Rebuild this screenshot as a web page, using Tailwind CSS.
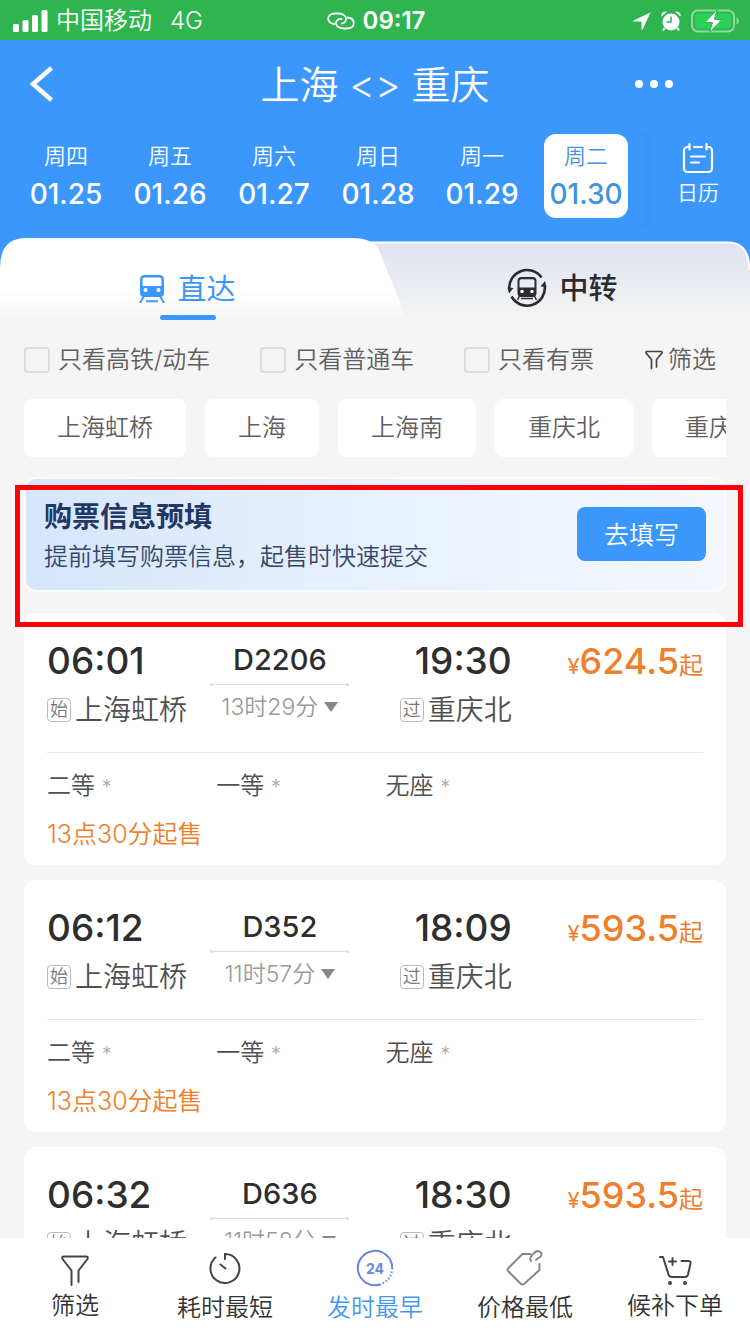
<!DOCTYPE html>
<html lang="zh-CN">
<head>
<meta charset="utf-8">
<meta name="viewport" content="width=device-width, initial-scale=1">
<title>上海 &lt;&gt; 重庆</title>
<script src="https://cdn.jsdelivr.net/npm/@tailwindcss/browser@4"></script>
</head>
<body class="flex h-screen flex-col overflow-hidden bg-[#f5f5f5] font-['Inter','Noto_Sans_CJK_SC',sans-serif] text-[24px] leading-[32px] font-[350] text-[#505050]">

<!-- Status bar -->
<div class="grid h-10 shrink-0 grid-cols-[1fr_auto_1fr] items-center bg-[#2fb54f] pt-[2px] pr-[10px] pl-3 text-white">
  <div class="flex items-center">
    <svg class="h-[22px] w-[36px]" viewBox="0 0 36 22" fill="currentColor"><rect x="1" y="14" width="6" height="8" rx="1.5"/><rect x="10.500" y="10" width="6" height="12" rx="1.5"/><rect x="20" y="5" width="6" height="17" rx="1.5"/><rect x="29.500" y="0" width="6" height="22" rx="1.5"/></svg>
    <span class="ml-2">中国移动</span>
    <span class="ml-[18px]">4G</span>
  </div>
  <div class="flex items-center gap-2">
    <svg class="h-[18px] w-[28px]" viewBox="0 0 28 18" fill="none" stroke="currentColor" stroke-width="1.800" stroke-linecap="round"><path d="M7 12C3.500 11.500 1.200 9.300 1.200 6.600 1.200 3.500 4 1.500 8 1.500h3c4 0 7.500 1.800 8 4.500.400 2.800-1.500 5-4 5.500"/><path d="M20.500 5.500c4 .500 6.300 2.900 6.300 5.700 0 3.100-2.800 5.300-6.800 5.300h-3c-4.500 0-8-2.300-8-5.300C9 8.500 11.500 6.500 14.500 7"/></svg>
    <span class="font-semibold">09:17</span>
  </div>
  <div class="flex items-center justify-end gap-[10px]">
    <svg class="h-[18px] w-[18px]" viewBox="0 0 18 18" fill="currentColor"><path d="M17.500.500.500 8.500c-.500.300-.400 1 .200 1H8.500v7.700c0 .700.800.800 1.100.200z"/></svg>
    <svg class="h-[20px] w-[20px]" viewBox="0 0 20 20"><g fill="currentColor"><circle cx="10" cy="11" r="8.500"/><path d="M.500 5.500A4 4 0 0 1 6 .800zM19.500 5.500A4 4 0 0 0 14 .800z"/></g><path d="m3.500 17-1.500 2.500M16.500 17l1.500 2.500" stroke="currentColor" stroke-width="2"/><path d="M10 5.500V11H5.500" fill="none" stroke="#2fb54f" stroke-width="1.500"/></svg>
    <svg class="h-[24px] w-[49px]" viewBox="0 0 49 24"><rect x="1" y="1.500" width="42" height="21" rx="6" fill="none" stroke="#8fd9a0" stroke-width="2"/><rect x="4" y="4.500" width="36" height="15" rx="3.500" fill="#2ed158"/><path d="M45.500 8.500c3 1 3 6 0 7z" fill="#8fd9a0"/><path d="M26 .500 14 13.500h7.500L18.500 23.500 31 10.500h-7.500z" fill="#fff" stroke="#2fb54f"/></svg>
  </div>
</div>

<!-- Title and dates -->
<header class="shrink-0 bg-[#3b97fb] text-white">
  <div class="grid h-[88px] grid-cols-[1fr_auto_1fr] items-center pr-[77px] pl-[29px]">
    <button type="button" aria-label="返回" class="w-[26px]"><svg class="h-[36px] w-[26px]" viewBox="0 0 26 36" fill="none" stroke="currentColor" stroke-width="4.500"><path d="M22.500 2 4 18l18.500 16"/></svg></button>
    <h1 class="ml-12 pt-[2px] text-[39px] leading-[48px]">上海 &lt;&gt; 重庆</h1>
    <button type="button" aria-label="更多" class="justify-self-end"><svg class="h-2 w-[38px]" viewBox="0 0 38 8" fill="currentColor"><circle cx="4" cy="4" r="4"/><circle cx="19" cy="4" r="4"/><circle cx="34" cy="4" r="4"/></svg></button>
  </div>
  <nav class="flex h-[110px] items-start justify-between pt-[6px] pr-2 pl-6" aria-label="日期">
    <div class="flex flex-1 justify-between text-[22px] leading-[28px]">
      <button type="button" class="h-[84px] w-[84px] rounded-xl pb-[3px]"><span class="block">周四</span><span class="mt-[10px] block text-[28px] font-[450]">01.25</span></button>
      <button type="button" class="h-[84px] w-[84px] rounded-xl pb-[3px]"><span class="block">周五</span><span class="mt-[10px] block text-[28px] font-[450]">01.26</span></button>
      <button type="button" class="h-[84px] w-[84px] rounded-xl pb-[3px]"><span class="block">周六</span><span class="mt-[10px] block text-[28px] font-[450]">01.27</span></button>
      <button type="button" class="h-[84px] w-[84px] rounded-xl pb-[3px]"><span class="block">周日</span><span class="mt-[10px] block text-[28px] font-[450]">01.28</span></button>
      <button type="button" class="h-[84px] w-[84px] rounded-xl pb-[3px]"><span class="block">周一</span><span class="mt-[10px] block text-[28px] font-[450]">01.29</span></button>
      <button type="button" class="h-[84px] w-[84px] rounded-xl bg-white pb-[3px] text-[#4392e0]" aria-current="date"><span class="block">周二</span><span class="mt-[10px] block text-[28px] font-[450]">01.30</span></button>
    </div>
    <div class="ml-3 h-[92px] w-[14px] bg-gradient-to-r from-[#3b97fb] via-[#3793f6] to-[#3b97fb]"></div>
    <button type="button" class="flex w-[88px] flex-col items-center pt-2 text-[21px] leading-[28px]">
      <svg class="h-[32px] w-[32px]" viewBox="0 0 32 32" fill="none" stroke="currentColor" stroke-width="2.200" stroke-linecap="round"><path d="M7.500 5H5.500A3.500 3.500 0 0 0 2 8.500v18A3.500 3.500 0 0 0 5.500 30h21a3.500 3.500 0 0 0 3.500-3.500v-18A3.500 3.500 0 0 0 26.500 5h-2M12 5h8M7.500 2v5.500M24.500 2v5.500M9 14.500h14M9 20.500h8"/></svg>
      <span class="mt-[5px]">日历</span>
    </button>
  </nav>
</header>

<!-- Trip type tabs -->
<div class="relative h-[84px] shrink-0 bg-gradient-to-b from-[#3b97fb] from-50% to-[#f5f5f5] to-50%">
  <svg class="absolute inset-0 h-full w-full" viewBox="0 0 750 84" preserveAspectRatio="none" aria-hidden="true">
    <defs>
      <linearGradient id="tabOn" x1="0" y1="0" x2="0" y2="1"><stop offset=".6" stop-color="#fff"/><stop offset="1" stop-color="#f5f5f5"/></linearGradient>
      <linearGradient id="tabOff" x1="0" y1="0" x2="0" y2="1"><stop offset="0" stop-color="#e2e1f6"/><stop offset=".2" stop-color="#e2e6ef"/><stop offset="1" stop-color="#f5f5f5"/></linearGradient>
    </defs>
    <path d="M340 4.500H728Q750 4.500 750 32V84H340z" fill="url(#tabOff)"/>
    <path d="M340 4.500H728Q749 4.500 749.500 32" fill="none" stroke="#fff" stroke-width="2"/>
    <path d="M0 84V30Q0 0 26 0H352Q373 0 379 12L408 84z" fill="url(#tabOn)"/>
  </svg>
  <div class="relative grid h-full grid-cols-2" role="tablist">
    <button type="button" role="tab" aria-selected="true" class="flex flex-col items-center pt-[32px] text-[29px] leading-[36px] font-normal text-[#3b97fb]">
      <span class="flex items-center gap-3">
        <svg class="h-[28px] w-[26px]" viewBox="0 0 26 28"><path d="M6 0h14q5 0 5 5v13q0 4-4 4H5q-4 0-4-4V5q0-5 5-5zM3.500 4v7h19V4q-.500-1.500-2-1.500h-15q-1.500 0-2 1.500z" fill="#3b97fb" fill-rule="evenodd"/><circle cx="6.500" cy="15" r="2" fill="#fff"/><circle cx="19.500" cy="15" r="2" fill="#fff"/><path d="M4.500 22 1 28M21.500 22l3.500 6M7 26.300h12" stroke="#3b97fb" stroke-width="2"/></svg>
        <span class="pt-[2px]">直达</span>
      </span>
      <span class="mt-[7px] h-[5px] w-[56px] rounded-full bg-[#3b97fb]"></span>
    </button>
    <button type="button" role="tab" aria-selected="false" class="flex items-start justify-center gap-3 pt-[30px] text-[29px] leading-[38px] font-medium text-[#2b2b2f]">
      <svg class="h-[40px] w-[40px]" viewBox="0 0 40 40"><g fill="none" stroke="currentColor" stroke-width="2.600"><path d="M2.300 21.500A17.800 17.800 0 0 1 34.500 9.500"/><path d="M37.700 17.500A17.800 17.800 0 0 1 4.500 28.500"/></g><path d="M.500 19.500 6.500 20 2 25.500zM39.500 19l-6-.500L38 13z" fill="currentColor"/><path d="M14.500 9h11q4 0 4 4v12q0 4-4 4h-11q-4 0-4-4V13q0-4 4-4zM12.500 13v6.500h15V13q0-1.800-1.800-1.800H14.300Q12.500 11.200 12.500 13z" fill="currentColor" fill-rule="evenodd"/><circle cx="15" cy="23.500" r="1.800" fill="#e9ecf2"/><circle cx="25" cy="23.500" r="1.800" fill="#e9ecf2"/><path d="m12.500 28-2 4M27.500 28l2 4M14 30.500h12" stroke="currentColor" stroke-width="1.500"/></svg>
      <span class="pt-[2px]">中转</span>
    </button>
  </div>
</div>

<main class="relative flex min-h-0 flex-1 flex-col overflow-hidden px-6">
  <!-- Quick filters -->
  <form class="mt-[22px] flex shrink-0 items-center justify-between pr-[10px] text-[#606060]">
    <label class="flex items-center gap-2"><input type="checkbox" class="h-[26px] w-[26px] appearance-none rounded-[4px] border-2 border-[#dcdcdc]">只看高铁/动车</label>
    <label class="flex items-center gap-2"><input type="checkbox" class="h-[26px] w-[26px] appearance-none rounded-[4px] border-2 border-[#dcdcdc]">只看普通车</label>
    <label class="flex items-center gap-2"><input type="checkbox" class="h-[26px] w-[26px] appearance-none rounded-[4px] border-2 border-[#dcdcdc]">只看有票</label>
    <button type="button" class="flex items-center gap-1">
      <svg class="h-[20px] w-[20px]" viewBox="0 0 20 20" fill="none" stroke="#444" stroke-width="1.700" stroke-linecap="round" stroke-linejoin="round"><path d="M7.500 18.500V9.500L2 3q-.500-1.500 1-1.500h14q1.500 0 1 1.500l-5.500 6.500v7.500"/></svg>
      <span>筛选</span>
    </button>
  </form>

  <!-- Stations -->
  <div class="mt-[23px] flex shrink-0 gap-[19px] overflow-hidden text-[#606060]">
    <button type="button" class="h-[58px] shrink-0 rounded-lg bg-white px-[33px]">上海虹桥</button>
    <button type="button" class="h-[58px] shrink-0 rounded-lg bg-white px-[33px]">上海</button>
    <button type="button" class="h-[58px] shrink-0 rounded-lg bg-white px-[33px]">上海南</button>
    <button type="button" class="h-[58px] shrink-0 rounded-lg bg-white px-[33px]">重庆北</button>
    <button type="button" class="h-[58px] shrink-0 rounded-lg bg-white px-[33px]">重庆西</button>
  </div>

  <!-- Pre-fill banner -->
  <section class="mt-5 flex h-[115px] shrink-0 items-start justify-between rounded-xl border-2 border-[#f8fbff] bg-gradient-to-r from-[#d6e6fb] via-[#e8f1fe] to-[#f4f7fc] pr-[18px] pl-[18px]">
    <div class="pt-[20px] text-[#33486b]">
      <h2 class="text-[28px] leading-[36px] font-bold text-[#1f3864]">购票信息预填</h2>
      <p class="mt-[6px]">提前填写购票信息，起售时快速提交</p>
    </div>
    <button type="button" class="mt-[28px] h-[54px] w-[129px] rounded-lg bg-[#3b97fb] pt-[2px] text-[25px] text-white">去填写</button>
  </section>

  <!-- Trains -->
  <ul class="mt-[21px] flex flex-col gap-[15px]">
    <li class="h-[252px] shrink-0 rounded-xl bg-white px-[23px] pt-[28px]">
      <div class="grid h-[112px] grid-cols-[163fr_139fr_162fr_191fr] border-b border-[#e8e8e8]">
        <div>
          <p class="text-[37px] leading-[40px] font-[450] text-[#2e2e2e]">06:01</p>
          <p class="mt-[11px] flex items-center gap-1 text-[28px] leading-[36px] whitespace-nowrap"><span class="flex h-6 w-6 items-center justify-center rounded-[4px] border border-[#bbb] text-[18px] text-[#777]">始</span>上海虹桥</p>
        </div>
        <div class="text-center">
          <p class="relative border-b border-[#dcdcdc] pt-[3px] pb-2 text-[29px] leading-[32px] font-[450] text-[#2e2e2e] before:absolute before:-bottom-[2px] before:left-0 before:h-[3px] before:w-[3px] before:rounded-full before:bg-[#dcdcdc] after:absolute after:right-0 after:-bottom-[2px] after:h-[3px] after:w-[3px] after:rounded-full after:bg-[#dcdcdc]">D2206</p>
          <p class="mt-[6px] flex items-center justify-center gap-[6px] text-[23px] whitespace-nowrap text-[#999]">13时29分<svg class="h-[10px] w-[14px]" viewBox="0 0 14 10" fill="#888"><path d="M0 0h14L7 10z"/></svg></p>
        </div>
        <div class="flex flex-col items-end">
          <p class="text-[37px] leading-[40px] font-[450] text-[#2e2e2e]">19:30</p>
          <p class="mt-[11px] flex items-center gap-1 text-[28px] leading-[36px] whitespace-nowrap"><span class="flex h-6 w-6 items-center justify-center rounded-[4px] border border-[#bbb] text-[18px] text-[#777]">过</span>重庆北</p>
        </div>
        <p class="text-right leading-[40px] font-normal whitespace-nowrap text-[#ee7f2d]"><span class="text-[22px]">¥</span><span class="text-[36px] font-[450]">624.5</span>起</p>
      </div>
      <div class="mt-[17px] grid grid-cols-[169fr_169fr_317fr]">
        <p>二等 <span class="text-[20px] text-[#aaa]">*</span></p>
        <p>一等 <span class="text-[20px] text-[#aaa]">*</span></p>
        <p>无座 <span class="text-[20px] text-[#aaa]">*</span></p>
      </div>
      <p class="mt-[15px] text-[25px] text-[#ee7f2d]">13点30分起售</p>
    </li>
    <li class="h-[252px] shrink-0 rounded-xl bg-white px-[23px] pt-[28px]">
      <div class="grid h-[112px] grid-cols-[163fr_139fr_162fr_191fr] border-b border-[#e8e8e8]">
        <div>
          <p class="text-[37px] leading-[40px] font-[450] text-[#2e2e2e]">06:12</p>
          <p class="mt-[11px] flex items-center gap-1 text-[28px] leading-[36px] whitespace-nowrap"><span class="flex h-6 w-6 items-center justify-center rounded-[4px] border border-[#bbb] text-[18px] text-[#777]">始</span>上海虹桥</p>
        </div>
        <div class="text-center">
          <p class="relative border-b border-[#dcdcdc] pt-[3px] pb-2 text-[29px] leading-[32px] font-[450] text-[#2e2e2e] before:absolute before:-bottom-[2px] before:left-0 before:h-[3px] before:w-[3px] before:rounded-full before:bg-[#dcdcdc] after:absolute after:right-0 after:-bottom-[2px] after:h-[3px] after:w-[3px] after:rounded-full after:bg-[#dcdcdc]">D352</p>
          <p class="mt-[6px] flex items-center justify-center gap-[6px] text-[23px] whitespace-nowrap text-[#999]">11时57分<svg class="h-[10px] w-[14px]" viewBox="0 0 14 10" fill="#888"><path d="M0 0h14L7 10z"/></svg></p>
        </div>
        <div class="flex flex-col items-end">
          <p class="text-[37px] leading-[40px] font-[450] text-[#2e2e2e]">18:09</p>
          <p class="mt-[11px] flex items-center gap-1 text-[28px] leading-[36px] whitespace-nowrap"><span class="flex h-6 w-6 items-center justify-center rounded-[4px] border border-[#bbb] text-[18px] text-[#777]">过</span>重庆北</p>
        </div>
        <p class="text-right leading-[40px] font-normal whitespace-nowrap text-[#ee7f2d]"><span class="text-[22px]">¥</span><span class="text-[36px] font-[450]">593.5</span>起</p>
      </div>
      <div class="mt-[17px] grid grid-cols-[169fr_169fr_317fr]">
        <p>二等 <span class="text-[20px] text-[#aaa]">*</span></p>
        <p>一等 <span class="text-[20px] text-[#aaa]">*</span></p>
        <p>无座 <span class="text-[20px] text-[#aaa]">*</span></p>
      </div>
      <p class="mt-[15px] text-[25px] text-[#ee7f2d]">13点30分起售</p>
    </li>
    <li class="h-[252px] shrink-0 rounded-xl bg-white px-[23px] pt-[28px]">
      <div class="grid h-[112px] grid-cols-[163fr_139fr_162fr_191fr] border-b border-[#e8e8e8]">
        <div>
          <p class="text-[37px] leading-[40px] font-[450] text-[#2e2e2e]">06:32</p>
          <p class="mt-[11px] flex items-center gap-1 text-[28px] leading-[36px] whitespace-nowrap"><span class="flex h-6 w-6 items-center justify-center rounded-[4px] border border-[#bbb] text-[18px] text-[#777]">始</span>上海虹桥</p>
        </div>
        <div class="text-center">
          <p class="relative border-b border-[#dcdcdc] pt-[3px] pb-2 text-[29px] leading-[32px] font-[450] text-[#2e2e2e] before:absolute before:-bottom-[2px] before:left-0 before:h-[3px] before:w-[3px] before:rounded-full before:bg-[#dcdcdc] after:absolute after:right-0 after:-bottom-[2px] after:h-[3px] after:w-[3px] after:rounded-full after:bg-[#dcdcdc]">D636</p>
          <p class="mt-[6px] flex items-center justify-center gap-[6px] text-[23px] whitespace-nowrap text-[#999]">11时58分<svg class="h-[10px] w-[14px]" viewBox="0 0 14 10" fill="#888"><path d="M0 0h14L7 10z"/></svg></p>
        </div>
        <div class="flex flex-col items-end">
          <p class="text-[37px] leading-[40px] font-[450] text-[#2e2e2e]">18:30</p>
          <p class="mt-[11px] flex items-center gap-1 text-[28px] leading-[36px] whitespace-nowrap"><span class="flex h-6 w-6 items-center justify-center rounded-[4px] border border-[#bbb] text-[18px] text-[#777]">过</span>重庆北</p>
        </div>
        <p class="text-right leading-[40px] font-normal whitespace-nowrap text-[#ee7f2d]"><span class="text-[22px]">¥</span><span class="text-[36px] font-[450]">593.5</span>起</p>
      </div>
    </li>
  </ul>

  <!-- Highlight frame over the banner -->
  <div class="pointer-events-none absolute top-[163px] right-[7px] left-[15px] h-[142px] border-[5px] border-[#fb0007]"></div>
</main>

<!-- Sort bar -->
<footer class="grid h-[96px] shrink-0 grid-cols-5 bg-white text-[#333]">
  <button type="button" class="flex flex-col items-center pt-[13px]">
    <svg class="h-[38px] w-[38px]" viewBox="0 0 38 38" fill="none" stroke="#444" stroke-width="2" stroke-linecap="round" stroke-linejoin="round"><path d="M15.500 34V19.500L6.500 8q-1-2.500 1.500-2.500h22q2.500 0 1.500 2.500l-9 11.500V31"/></svg>
    <span class="mt-px">筛选</span>
  </button>
  <button type="button" class="flex flex-col items-center pt-[11px]">
    <svg class="h-[38px] w-[38px]" viewBox="0 0 38 38" fill="none" stroke="#444" stroke-width="2" stroke-linecap="round"><path d="M19 10V5A14.500 14.500 0 1 1 9.500 8.500M14.500 15.500l5 4"/></svg>
    <span class="mt-[5px]">耗时最短</span>
  </button>
  <button type="button" class="flex flex-col items-center pt-[11px] text-[#4298f0]">
    <svg class="h-[38px] w-[38px]" viewBox="0 0 38 38" fill="none" stroke="#6686e0" stroke-width="2"><path d="M24 35.500A17.200 17.200 0 1 1 36.200 19"/><path d="M36.200 19A17.200 17.200 0 0 1 22 36" stroke-dasharray="1.500 2"/><text x="19" y="24.500" text-anchor="middle" font-family="Inter" font-size="14" font-weight="700" fill="#6686e0" stroke="none">24</text></svg>
    <span class="mt-[5px]">发时最早</span>
  </button>
  <button type="button" class="flex flex-col items-center pt-[11px]">
    <svg class="h-[38px] w-[38px]" viewBox="0 0 38 38" fill="none" stroke="#888" stroke-width="2" stroke-linecap="round" stroke-linejoin="round"><path d="M24.500 5H16.500L2 19.500q-1 1 0 2.500l13 13q1.500 1 3 0L33.500 21v-6"/><path d="M25 12c-2.500-3 1-5.500 3-8 3-3.500 8-1.500 7.500 2-.300 3-4 2.500-5.500 5"/></svg>
    <span class="mt-[5px]">价格最低</span>
  </button>
  <button type="button" class="flex flex-col items-center pt-[13px]">
    <svg class="h-[38px] w-[38px]" viewBox="0 0 38 38" fill="none" stroke="#444" stroke-width="2" stroke-linecap="round" stroke-linejoin="round"><path d="M4 6h3l5.500 17.500q.800 2.500 3.500 2.500h13q2.300 0 3-2.500l2.500-11q.500-2.500-2-2.500h-7M16.500 7v7M13 10.500h7"/><g fill="#444" stroke="none"><circle cx="14" cy="32" r="2"/><circle cx="29" cy="32" r="2"/></g></svg>
    <span class="mt-px">候补下单</span>
  </button>
</footer>
</body>
</html>
